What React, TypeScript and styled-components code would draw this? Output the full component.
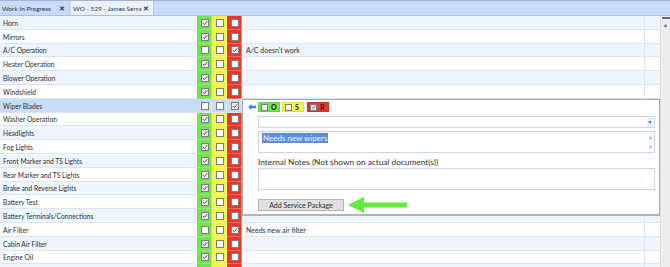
import React from "react";
import styled, { createGlobalStyle, css } from "styled-components";

const Global = createGlobalStyle`
  html, body { margin: 0; padding: 0; background: #fff; }
  body { font-family: Lato, "Noto Sans", Arial, sans-serif; font-size: 7px; color: #333; }
  * { box-sizing: border-box; }
`;

const ROW_H = 13.8;

const Root = styled.div`
  width: 670px;
  height: 267px;
  overflow: hidden;
  display: flex;
  flex-direction: column;
`;

const TabBar = styled.div`
  height: 16px;
  flex: none;
  display: flex;
  align-items: flex-end;
  background: #c7dbf6;
  border-top: 1px solid #a3b3c7;
  border-bottom: 1px solid #a7bfe0;
`;

const Tab = styled.div<{ $active?: boolean; $w: number }>`
  width: ${(p) => p.$w}px;
  height: 14px;
  display: flex;
  align-items: center;
  justify-content: space-between;
  padding: 0 4px 0 2px;
  font-size: 6.5px;
  color: #1d3557;
  white-space: nowrap;
  border-right: 1px solid #b0c6e4;
  ${(p) =>
    p.$active &&
    css`
      background: #eaf1fb;
      border-left: 1px solid #d2e0f3;
    `}
`;

const Close = styled.span`
  font-size: 7px;
  font-weight: 700;
  color: #1b3a66;
`;

const Body = styled.div`
  flex: 1;
  display: flex;
  min-height: 0;
`;

const Grid = styled.div`
  position: relative;
  flex: 1;
  overflow: hidden;
`;

const Row = styled.div<{ $alt: boolean; $sel?: boolean }>`
  height: ${ROW_H}px;
  display: grid;
  grid-template-columns: 197px 15px 15px 15px 403px 15px;
  background: ${(p) => (p.$sel ? "#c8dcf6" : p.$alt ? "#eff5fd" : "#ffffff")};
  box-shadow: inset 0 -1px 0 #d9e6f7;
`;

const Label = styled.div`
  display: flex;
  align-items: center;
  padding-left: 3px;
  white-space: nowrap;
  overflow: hidden;
  font-size: 6.7px;
  color: #2f2f2f;
`;

const colorMap: Record<string, string> = {
  g: "#72e152",
  y: "#f5f44d",
  r: "#e8372c",
};

const ColorCell = styled.div<{ $c: string; $sel?: boolean }>`
  display: flex;
  align-items: center;
  justify-content: center;
  background: ${(p) => (p.$sel ? "transparent" : colorMap[p.$c])};
  box-shadow: inset -1px 0 0 rgba(255, 255, 255, 0.35), inset 0 -1px 0 rgba(255, 255, 255, 0.25);
`;

const Notes = styled.div`
  display: flex;
  align-items: center;
  padding-left: 4px;
  color: #2f2f2f;
  border-right: 1px solid #d9e6f7;
`;

const Extra = styled.div``;

const Box = styled.span<{ $checked?: boolean; $size?: number }>`
  width: ${(p) => p.$size ?? 8}px;
  height: ${(p) => p.$size ?? 8}px;
  border: 1px solid #7d7d7d;
  background: ${(p) => (p.$checked ? "#ececec" : "#ffffff")};
  display: inline-flex;
  align-items: center;
  justify-content: center;
  flex: none;
`;

const Check = ({ checked, size }: { checked?: boolean; size?: number }) => (
  <Box $checked={checked} $size={size}>
    {checked && (
      <svg width="6" height="6" viewBox="0 0 6 6">
        <path d="M0.8 3 L2.4 4.6 L5.3 1.2" stroke="#5a5a5a" strokeWidth="1" fill="none" />
      </svg>
    )}
  </Box>
);

const Scrollbar = styled.div`
  width: 10px;
  flex: none;
  background: #eeeeee;
  border-left: 1px solid #dcdcdc;
  display: flex;
  flex-direction: column;
  align-items: center;
`;

const ScrollCap = styled.div`
  width: 8px;
  height: 2px;
  margin-top: 1px;
  background: #6a6a6a;
`;

const ScrollArrow = styled.div`
  margin-top: 3px;
  font-size: 6px;
  line-height: 6px;
  color: #777;
`;

const Panel = styled.div`
  position: absolute;
  left: 242px;
  top: 83px;
  width: 418px;
  height: 117px;
  background: #fff;
  border: 1px solid #a8a8a8;
  border-bottom: 2px solid #b5b5b5;
  padding: 2px 4px 0 15px;
  display: flex;
  flex-direction: column;
  font-size: 8px;
`;

const TopRow = styled.div`
  height: 10px;
  display: flex;
  align-items: center;
  margin-left: -11px;
  gap: 2px;
`;

const BackArrow = styled.span`
  width: 9px;
  display: inline-flex;
  justify-content: center;
`;

const Chip = styled.div<{ $c: string }>`
  width: 22px;
  height: 10px;
  display: flex;
  align-items: center;
  gap: 3px;
  padding-left: 2px;
  background: ${(p) => colorMap[p.$c]};
  border: 1px solid rgba(0, 0, 0, 0.08);
  font-weight: 700;
  font-size: 7px;
  color: #222;
`;

const Select = styled.div`
  margin-top: 4px;
  height: 13px;
  border: 1px solid #c9d6e8;
  display: flex;
  justify-content: flex-end;
  align-items: center;
  padding-right: 1px;
`;

const SelectBtn = styled.span`
  width: 6px;
  height: 9px;
  background: #e6edf7;
  display: inline-flex;
  align-items: center;
  justify-content: center;
  font-size: 5px;
  color: #556;
`;

const TextArea = styled.div<{ $h: number }>`
  height: ${(p) => p.$h}px;
  border: 1px solid #c9d6e8;
  display: flex;
  justify-content: space-between;
  padding: 1px 0 0 3px;
`;

const Selected = styled.span`
  align-self: flex-start;
  background: #5b8ed9;
  color: #eef4ff;
  line-height: 10px;
  padding: 0 1px;
`;

const ScrollCol = styled.div`
  width: 7px;
  display: flex;
  flex-direction: column;
  justify-content: space-between;
  align-items: center;
  font-size: 5px;
  color: #9aa;
  padding: 1px 0 2px;
`;

const FieldLabel = styled.div`
  margin-top: 4px;
  height: 12px;
  display: flex;
  align-items: center;
  font-size: 8.3px;
  color: #2f2f2f;
`;

const Button = styled.div`
  margin-top: 6px;
  display: flex;
  align-items: center;
  gap: 3px;
`;

const ButtonBox = styled.div`
  width: 86px;
  height: 12px;
  background: #e0e0e0;
  border: 1px solid #b3b3b3;
  display: flex;
  align-items: center;
  justify-content: center;
  font-size: 7px;
  color: #2b2b2b;
`;

type Item = { label: string; s: "g" | "r"; note?: string; sel?: boolean };

const items: Item[] = [
  { label: "Horn", s: "g" },
  { label: "Mirrors", s: "g" },
  { label: "A/C Operation", s: "r", note: "A/C doesn't work" },
  { label: "Heater Operation", s: "g" },
  { label: "Blower Operation", s: "g" },
  { label: "Windshield", s: "g" },
  { label: "Wiper Blades", s: "r", sel: true },
  { label: "Washer Operation", s: "g" },
  { label: "Headlights", s: "g" },
  { label: "Fog Lights", s: "g" },
  { label: "Front Marker and TS Lights", s: "g" },
  { label: "Rear Marker and TS Lights", s: "g" },
  { label: "Brake and Reverse Lights", s: "g" },
  { label: "Battery Test", s: "g" },
  { label: "Battery Terminals/Connections", s: "g" },
  { label: "Air Filter", s: "r", note: "Needs new air filter" },
  { label: "Cabin Air Filter", s: "g" },
  { label: "Engine Oil", s: "g" },
  { label: "", s: "g" },
];

export default function App() {
  return (
    <Root>
      <Global />
      <TabBar>
        <Tab $w={70}>
          Work In Progress <Close>✕</Close>
        </Tab>
        <Tab $active $w={84}>
          WO - 529 - James Serra <Close>✕</Close>
        </Tab>
      </TabBar>
      <Body>
        <Grid>
          {items.map((it, i) => (
            <Row key={i} $alt={i % 2 === 0} $sel={it.sel}>
              <Label>{it.label}</Label>
              <ColorCell $c="g" $sel={it.sel}>
                <Check checked={it.s === "g"} />
              </ColorCell>
              <ColorCell $c="y" $sel={it.sel}>
                <Check />
              </ColorCell>
              <ColorCell $c="r" $sel={it.sel}>
                <Check checked={it.s === "r"} />
              </ColorCell>
              <Notes>{it.note}</Notes>
              <Extra />
            </Row>
          ))}
          <Panel>
            <TopRow>
              <BackArrow>
                <svg width="8" height="6" viewBox="0 0 8 6">
                  <path d="M0 3 L3.5 0 L3.5 1.8 L8 1.8 L8 4.2 L3.5 4.2 L3.5 6 Z" fill="#4a86d4" />
                </svg>
              </BackArrow>
              <Chip $c="g">
                <Check size={7} />O
              </Chip>
              <Chip $c="y">
                <Check size={7} />S
              </Chip>
              <Chip $c="r" style={{ marginLeft: 1 }}>
                <Check size={7} checked />R
              </Chip>
            </TopRow>
            <Select>
              <SelectBtn>▼</SelectBtn>
            </Select>
            <TextArea $h={23} style={{ marginTop: 3 }}>
              <Selected>Needs new wipers</Selected>
              <ScrollCol>
                <span>▲</span>
                <span>▼</span>
              </ScrollCol>
            </TextArea>
            <FieldLabel>Internal Notes (Not shown on actual document(s))</FieldLabel>
            <TextArea $h={24} />
            <Button>
              <ButtonBox>Add Service Package</ButtonBox>
              <svg width="62" height="18" viewBox="0 0 62 18">
                <path d="M1 9 L17 1 L17 6.5 L60 6.5 L60 11.5 L17 11.5 L17 17 Z" fill="#62ea3e" />
              </svg>
            </Button>
          </Panel>
        </Grid>
        <Scrollbar>
          <ScrollCap />
          <ScrollArrow>▲</ScrollArrow>
        </Scrollbar>
      </Body>
    </Root>
  );
}
